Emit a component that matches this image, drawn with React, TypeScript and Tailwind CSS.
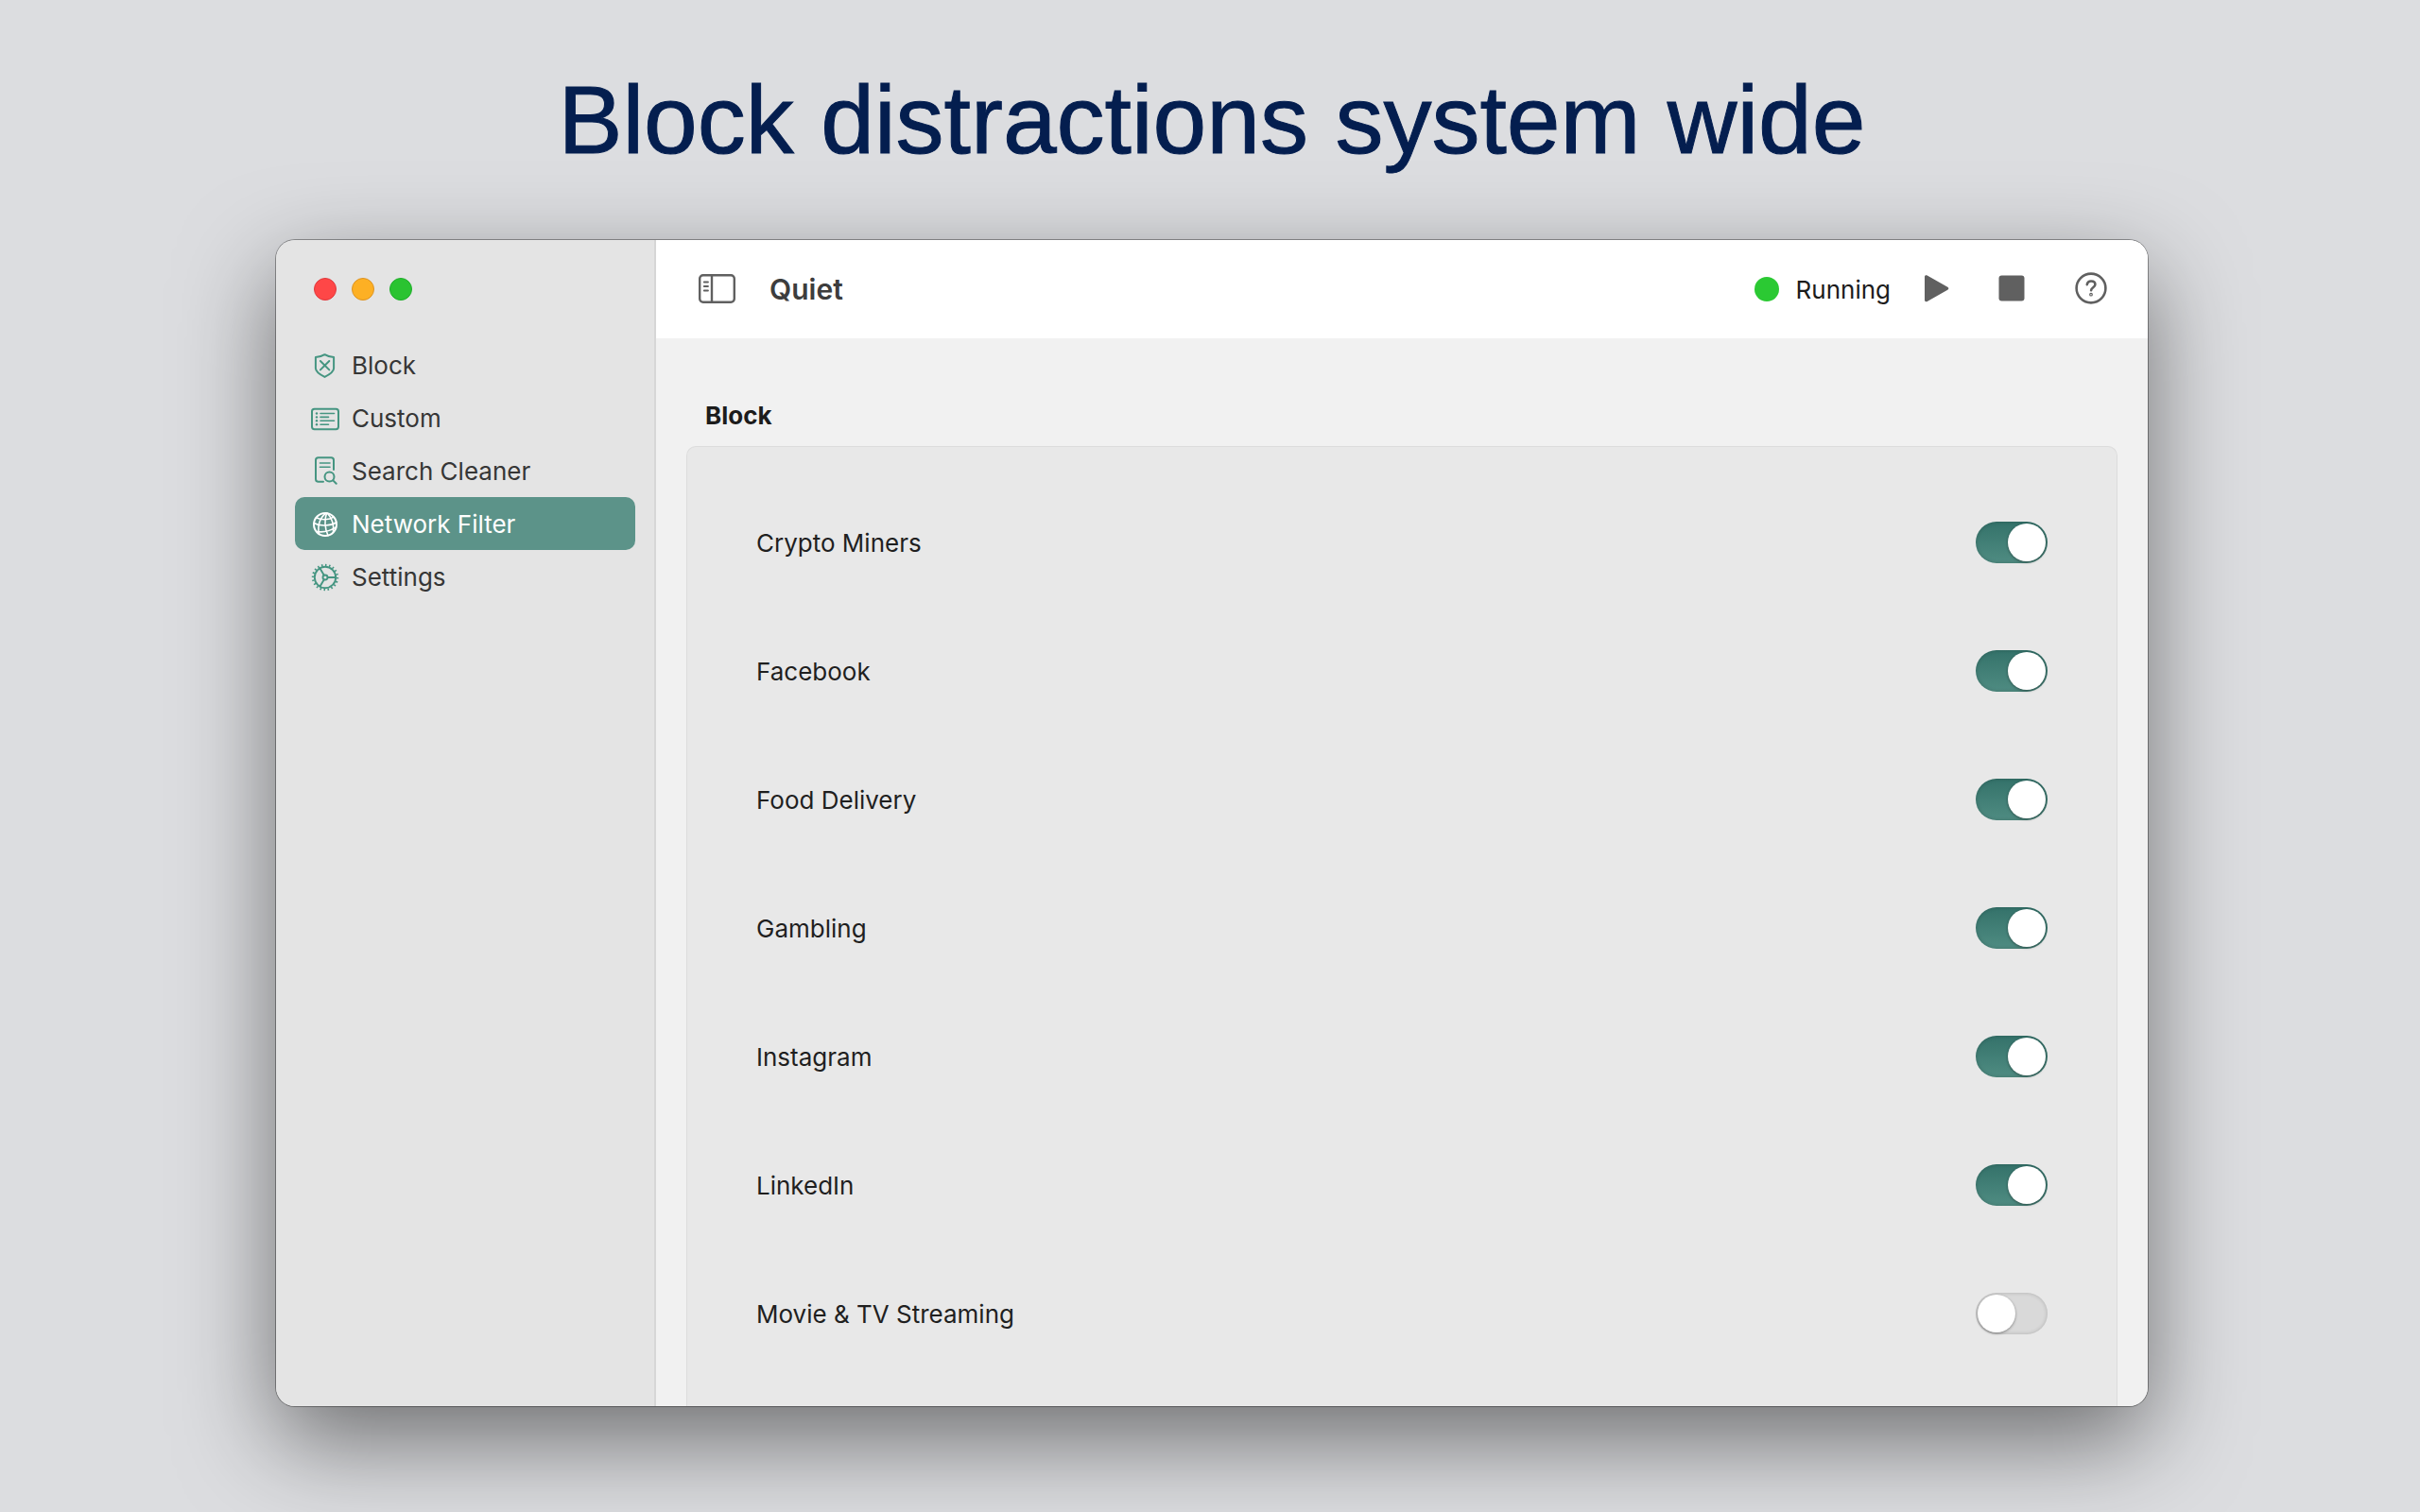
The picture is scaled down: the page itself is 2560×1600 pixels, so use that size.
import { useState } from "react";
import type { ReactNode } from "react";

function Glyph({ children }: { children: ReactNode }) {
  return (
    <svg
      viewBox="0 0 32 32"
      className="size-8 shrink-0"
      fill="none"
      stroke="currentColor"
      strokeWidth="2"
      strokeLinecap="round"
      strokeLinejoin="round"
      aria-hidden="true"
    >
      {children}
    </svg>
  );
}

const ShieldIcon = (
  <Glyph>
    <path d="M15.5 5.200c2.600 1.700 5.800 2.600 9.600 2.900v11.600c0 3.600-4.600 6.600-9.600 9.200-5-2.600-9.600-5.600-9.600-9.200V8.100c3.800-.3 7-1.200 9.600-2.900z" />
    <path d="M10.900 12l9.400 9.400M20.300 12l-9.400 9.400" />
  </Glyph>
);

const ListIcon = (
  <Glyph>
    <rect x="2" y="6.800" width="28" height="21.400" rx="2.600" />
    <path strokeWidth="1.600" d="M11 11.500h14.500M11 15.400h8.500M11 19.300h14.500M11 23.200h8.500" />
    <g fill="currentColor" stroke="none">
      <circle cx="7" cy="11.500" r="1.200" />
      <circle cx="7" cy="15.400" r="1.200" />
      <circle cx="7" cy="19.300" r="1.200" />
      <circle cx="7" cy="23.200" r="1.200" />
    </g>
  </Glyph>
);

const SearchDocIcon = (
  <Glyph>
    <path d="M25 15V5c0-1.700-1-2.700-2.700-2.700H8.700C7 2.300 6 3.300 6 5v20c0 1.700 1 2.700 2.700 2.700H14" />
    <path strokeWidth="1.600" d="M10.500 8H21M10.500 12.300H21" />
    <circle cx="20.500" cy="22.500" r="5" />
    <path d="M24.300 26.400l3.400 3.400" />
  </Glyph>
);

const GlobeIcon = (
  <Glyph>
    <circle cx="16" cy="17" r="12" />
    <g strokeWidth="1.600">
      <path d="M17 5C10.500 9.500 7.500 18 9.500 27" />
      <path d="M17.500 5c-2.500 7-2 16.500 1.500 23.700" />
      <path d="M18.500 5.200c4.500 5 6.800 12 6 19.300" />
      <path d="M6.500 9.800c5.500 2.700 13.500 2.600 18.500-.6" />
      <path d="M4 15.500c6.500 3.700 17.500 3.200 24-.8" />
      <path d="M7 24.500c6.500 1 14.500-.8 20-4.300" />
    </g>
  </Glyph>
);

const GearIcon = (
  <Glyph>
    <circle cx="16" cy="17" r="11.200" strokeWidth="1.900" />
    <circle
      cx="16"
      cy="17"
      r="13"
      pathLength="40"
      strokeDasharray="0.750 1.250"
      strokeLinecap="butt"
      strokeWidth="2.400"
    />
    <circle cx="16" cy="17" r="2.500" strokeWidth="1.900" />
    <path strokeWidth="1.900" d="M18.800 17H27M14.700 14.600l-4.200-7.200M14.700 19.400l-4.200 7.200" />
  </Glyph>
);

const navItems = [
  { label: "Block", icon: ShieldIcon },
  { label: "Custom", icon: ListIcon },
  { label: "Search Cleaner", icon: SearchDocIcon },
  { label: "Network Filter", icon: GlobeIcon },
  { label: "Settings", icon: GearIcon },
];

const filters = [
  { id: "crypto-miners", label: "Crypto Miners", on: true },
  { id: "facebook", label: "Facebook", on: true },
  { id: "food-delivery", label: "Food Delivery", on: true },
  { id: "gambling", label: "Gambling", on: true },
  { id: "instagram", label: "Instagram", on: true },
  { id: "linkedin", label: "LinkedIn", on: true },
  { id: "streaming", label: "Movie & TV Streaming", on: false },
];

function Sidebar() {
  const [current, setCurrent] = useState("Network Filter");
  return (
    <aside className="w-[402px] shrink-0 border-r-2 border-[#d6d6d6] bg-[#e4e4e4]">
      <div className="flex h-[104px] items-center gap-4 pl-10">
        <button aria-label="Close" className="size-6 rounded-full border border-[#e0383c] bg-[#fe4747]" />
        <button aria-label="Minimize" className="size-6 rounded-full border border-[#dd9322] bg-[#fdb024]" />
        <button aria-label="Zoom" className="size-6 rounded-full border border-[#1fae2a] bg-[#2ac331]" />
      </div>
      <nav className="pr-5 pl-5">
        {navItems.map((item) => {
          const active = item.label === current;
          return (
            <button
              key={item.label}
              onClick={() => setCurrent(item.label)}
              aria-current={active ? "page" : undefined}
              className={
                active
                  ? "flex h-14 w-full items-center gap-3 rounded-[10px] bg-[#5c9389] pl-4 text-white"
                  : "flex h-14 w-full items-center gap-3 rounded-[10px] pl-4 text-[#459581]"
              }
            >
              {item.icon}
              <span className={active ? "pt-0.5 text-white" : "pt-0.5 text-[#363636]"}>{item.label}</span>
            </button>
          );
        })}
      </nav>
    </aside>
  );
}

function Toolbar() {
  return (
    <header className="flex h-[104px] shrink-0 items-center bg-white pr-[42px] pl-11 text-[#606060]">
      <button aria-label="Toggle sidebar">
        <svg viewBox="0 0 40 32" className="h-8 w-10" fill="none" stroke="currentColor" strokeWidth="2.400" aria-hidden="true">
          <rect x="2.200" y="1.200" width="36.600" height="28.600" rx="3.600" />
          <path d="M15 1.200v28.600" />
          <path strokeWidth="1.800" strokeLinecap="round" d="M6.800 8.500h4.200M6.800 13h4.200M6.800 17.500h4.200" />
        </svg>
      </button>
      <h2 className="ml-9 text-3xl font-semibold text-[#3d3d3d]">Quiet</h2>
      <div className="ml-auto flex items-center gap-[18px] text-[#1c1c1c]">
        <span className="size-[26px] rounded-full bg-[#2bc933]" />
        <span className="pt-0.5">Running</span>
      </div>
      <button aria-label="Start" className="ml-8">
        <svg viewBox="0 0 32 32" className="size-8" fill="currentColor" aria-hidden="true">
          <path d="M4 3c0-1.500 1.300-2.200 2.700-1.400l21.600 12.200c1.400.8 1.400 2.100 0 2.900L6.700 29C5.300 29.800 4 29.100 4 27.600z" />
        </svg>
      </button>
      <button aria-label="Stop" className="ml-12">
        <svg viewBox="0 0 32 32" className="size-8" fill="currentColor" aria-hidden="true">
          <rect x="2.500" y="1.500" width="27" height="27" rx="3" />
        </svg>
      </button>
      <button aria-label="Help" className="ml-[50px]">
        <svg
          viewBox="0 0 36 36"
          className="size-9"
          fill="none"
          stroke="currentColor"
          strokeWidth="2.600"
          strokeLinecap="round"
          strokeLinejoin="round"
          aria-hidden="true"
        >
          <circle cx="18" cy="17" r="15.400" />
          <path d="M13.800 13.200c.3-2.400 2-3.700 4.300-3.700 2.500 0 4.300 1.400 4.300 3.600 0 3.200-4.300 3.200-4.300 6.200" />
          <circle cx="18" cy="23.700" r=".6" />
        </svg>
      </button>
    </header>
  );
}

function FilterRow({ id, label, on }: { id: string; label: string; on: boolean }) {
  return (
    <li className="flex h-[136px] items-center justify-between px-[73px]">
      <label htmlFor={id} className="pt-0.5">
        {label}
      </label>
      <input
        id={id}
        type="checkbox"
        role="switch"
        defaultChecked={on}
        className="h-11 w-[76px] appearance-none rounded-full bg-[#d9d9d9] p-0.5 shadow-[inset_0_0_4px_rgba(0,0,0,0.2)] before:block before:size-10 before:rounded-full before:bg-white before:shadow-[0_1px_3px_rgba(0,0,0,0.4)] checked:bg-linear-to-b checked:from-[#34726a] checked:to-[#4f8c82] checked:before:ml-8"
      />
    </li>
  );
}

export default function App() {
  return (
    <div className="flex min-h-screen flex-col bg-[#dcdde0] pr-72 pb-28 pl-[292px] font-['Inter',sans-serif] text-[26px] leading-8 text-[#1f1f1f]">
      <h1 className="flex h-[254px] items-center justify-center text-center font-['Liberation_Sans',sans-serif] text-[102px] leading-none text-[#041e4f] [-webkit-text-stroke:1px_#041e4f]">
        Block distractions system wide
      </h1>
      <div className="flex grow overflow-hidden rounded-[20px] shadow-[0_0_0_1px_rgba(0,0,0,0.35),0_36px_100px_rgba(0,0,0,0.5)]">
        <Sidebar />
        <main className="flex grow flex-col bg-[#f1f1f1]">
          <Toolbar />
          <section className="flex grow flex-col px-8 pt-16">
            <h3 className="mb-4 pt-0.5 pl-5 font-bold text-[#1c1c1c]">Block</h3>
            <ul className="grow rounded-t-[10px] border border-b-0 border-[#dcdcdc] bg-[#e8e8e8] pt-[33px]">
              {filters.map((filter) => (
                <FilterRow key={filter.id} {...filter} />
              ))}
            </ul>
          </section>
        </main>
      </div>
    </div>
  );
}
